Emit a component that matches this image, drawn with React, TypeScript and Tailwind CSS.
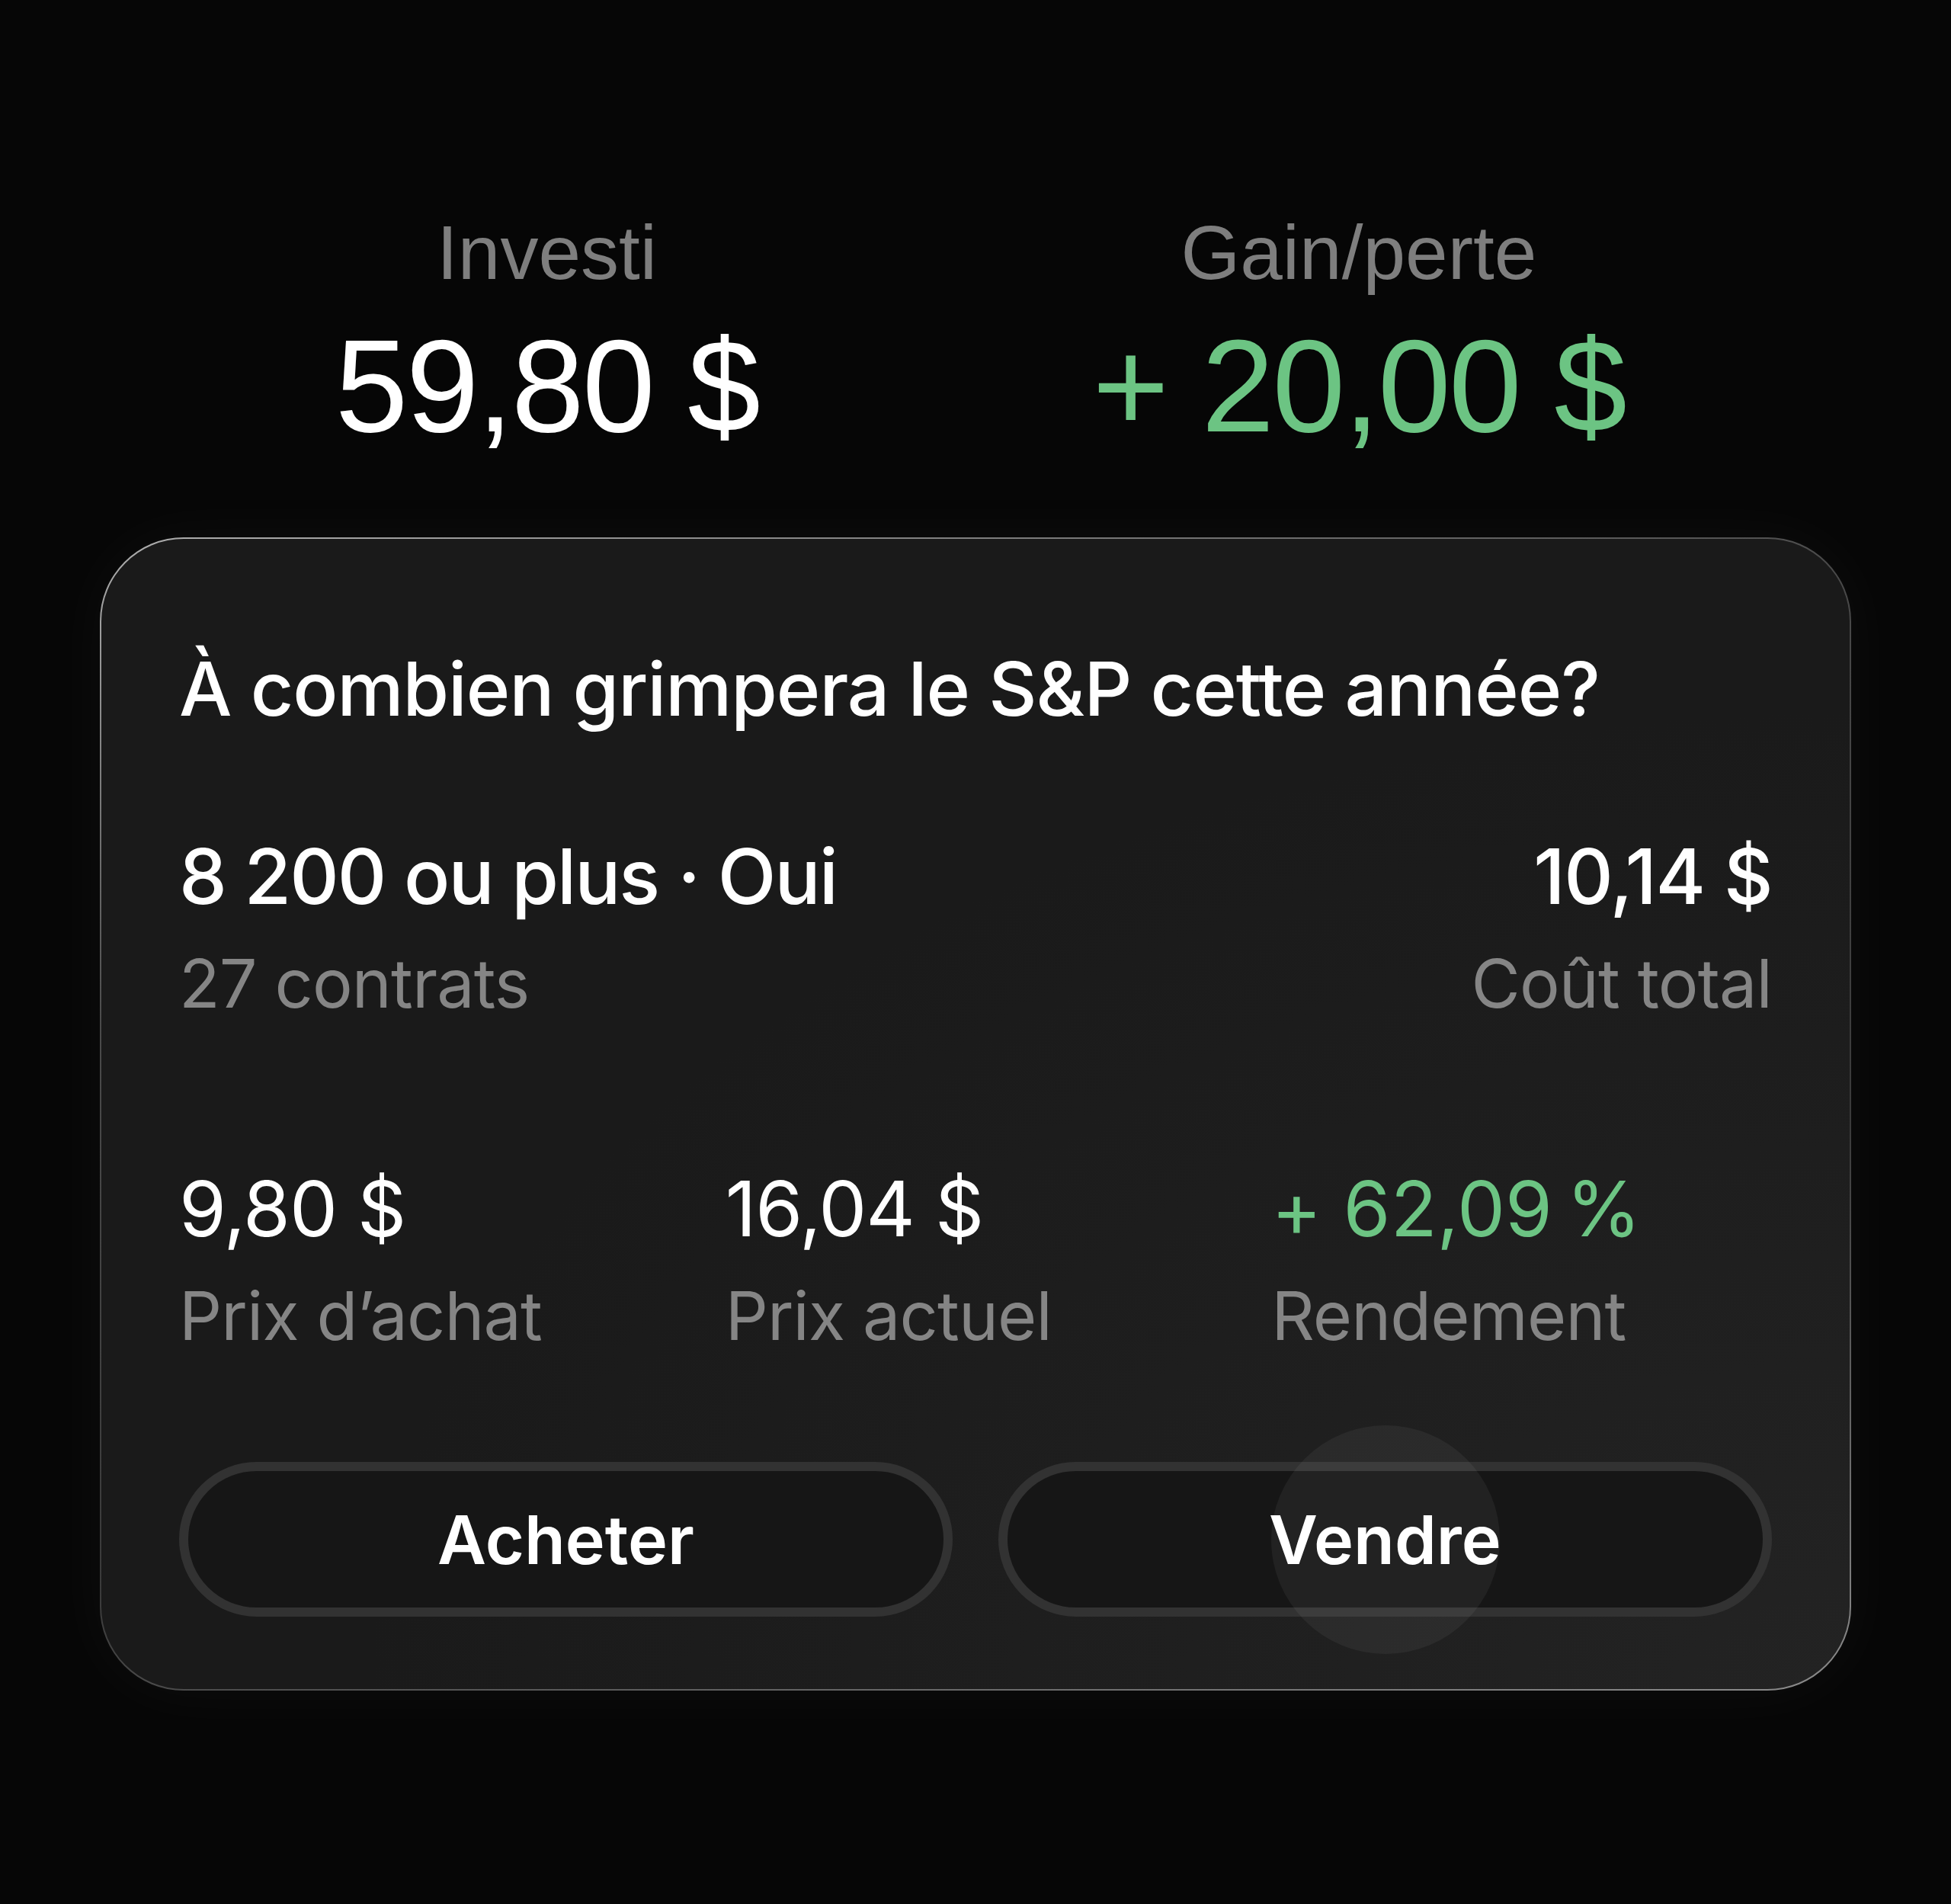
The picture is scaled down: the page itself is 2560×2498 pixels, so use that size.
import React from "react";

// Position summary card (FR)
const sans = { fontFamily: "Inter, 'Noto Sans', sans-serif" };
const helv = { fontFamily: "'Liberation Sans', Arial, sans-serif" };

function Stat({ label, value, positive = false }: { label: string; value: string; positive?: boolean }) {
  return (
    <div className="flex flex-col items-center" style={helv}>
      <span className="text-[100px] leading-none text-[#7e7e7e]">{label}</span>
      <span
        className={`mt-[39px] text-[172px] leading-none tracking-[-0.015em] ${
          positive ? "text-[#6cc483]" : "text-white"
        }`}
      >
        {value}
      </span>
    </div>
  );
}

function Metric({ value, label, positive = false }: { value: string; label: string; positive?: boolean }) {
  return (
    <div className="flex flex-col">
      <span className={`text-[100px] leading-none tracking-[-0.01em] ${positive ? "text-[#6cc483]" : "text-white"}`}>
        {value}
      </span>
      <span className="mt-[46px] text-[88px] leading-none tracking-[-0.01em] text-[#858585]">{label}</span>
    </div>
  );
}

function PillButton({ children, ripple = false }: { children: React.ReactNode; ripple?: boolean }) {
  return (
    <button className="relative h-[203px] rounded-full border-[12px] border-[#323232] bg-[#161616] flex items-center justify-center">
      {ripple && (
        <span className="absolute left-1/2 top-1/2 w-[300px] h-[300px] -translate-x-1/2 -translate-y-1/2 rounded-full bg-white/[0.05]" />
      )}
      <span className="relative text-[88px] leading-none font-semibold text-white">{children}</span>
    </button>
  );
}

export default function App() {
  return (
    <div className="min-h-[2498px] w-[2560px] bg-[#060606] flex flex-col items-center pt-[281px]" style={sans}>
      {/* Summary */}
      <div className="ml-[12px] flex justify-center gap-[438px]">
        <Stat label="Investi" value="59,80 $" />
        <Stat label="Gain/perte" value="+ 20,00 $" positive />
      </div>

      {/* Contract card */}
      <div className="mt-[113px] w-[2298px] rounded-[110px] p-[2px] bg-[linear-gradient(165deg,#b0b0b0_0%,#4a4a4a_30%,#3a3a3a_65%,#8c8c8c_100%)] shadow-[0_0_90px_rgba(255,255,255,0.04)]">
        <div className="rounded-[108px] bg-[radial-gradient(ellipse_at_bottom_right,#232323_0%,#1a1a1a_60%)] px-[102px] pt-[148px] pb-[95px]">
          <h2 className="text-[98px] leading-none font-medium text-white tracking-[-0.01em]">
            À combien grimpera le S&amp;P cette année?
          </h2>

          <div className="mt-[147px] flex justify-between">
            <div className="flex flex-col">
              <span className="text-[100px] leading-none font-medium text-white tracking-[-0.02em]">
                8 200 ou plus · Oui
              </span>
              <span className="mt-[46px] text-[88px] leading-none tracking-[-0.01em] text-[#858585]">27 contrats</span>
            </div>
            <div className="flex flex-col items-end">
              <span className="text-[100px] leading-none font-medium text-white tracking-[-0.015em]">10,14 $</span>
              <span className="mt-[46px] text-[88px] leading-none tracking-[-0.01em] text-[#858585]">Coût total</span>
            </div>
          </div>

          <div className="mt-[202px] grid grid-cols-3 gap-[60px]">
            <Metric value="9,80 $" label="Prix d’achat" />
            <Metric value="16,04 $" label="Prix actuel" />
            <Metric value={"+ 62,09\u202F%"} label="Rendement" positive />
          </div>

          <div className="mt-[148px] grid grid-cols-2 gap-[60px]">
            <PillButton>Acheter</PillButton>
            <PillButton ripple>Vendre</PillButton>
          </div>
        </div>
      </div>
    </div>
  );
}
